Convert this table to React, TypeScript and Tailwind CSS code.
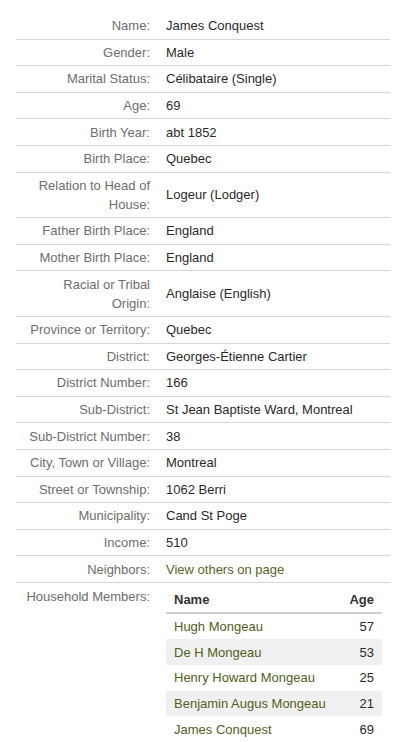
import React from "react";

const rows: { label: string; value: string; link?: boolean }[] = [
  { label: "Name:", value: "James Conquest" },
  { label: "Gender:", value: "Male" },
  { label: "Marital Status:", value: "Célibataire (Single)" },
  { label: "Age:", value: "69" },
  { label: "Birth Year:", value: "abt 1852" },
  { label: "Birth Place:", value: "Quebec" },
  { label: "Relation to Head of House:", value: "Logeur (Lodger)" },
  { label: "Father Birth Place:", value: "England" },
  { label: "Mother Birth Place:", value: "England" },
  { label: "Racial or Tribal Origin:", value: "Anglaise (English)" },
  { label: "Province or Territory:", value: "Quebec" },
  { label: "District:", value: "Georges-Étienne Cartier" },
  { label: "District Number:", value: "166" },
  { label: "Sub-District:", value: "St Jean Baptiste Ward, Montreal" },
  { label: "Sub-District Number:", value: "38" },
  { label: "City, Town or Village:", value: "Montreal" },
  { label: "Street or Township:", value: "1062 Berri" },
  { label: "Municipality:", value: "Cand St Poge" },
  { label: "Income:", value: "510" },
  { label: "Neighbors:", value: "View others on page", link: true },
];

const members = [
  { name: "Hugh Mongeau", age: "57" },
  { name: "De H Mongeau", age: "53" },
  { name: "Henry Howard Mongeau", age: "25" },
  { name: "Benjamin Augus Mongeau", age: "21" },
  { name: "James Conquest", age: "69" },
];

export default function App() {
  return (
    <div
      className="w-[402px] h-[742px] bg-white overflow-hidden pt-[13px] pl-[16px] pr-[12px] text-[13px] leading-[19px]"
      style={{ fontFamily: '"Liberation Sans", Arial, sans-serif' }}
    >
      {rows.map((r, i) => (
        <div key={i} className="flex items-center border-b border-[#d6d6d6]">
          <div className="w-[134px] shrink-0 pl-[9px] py-[3.3px] text-right text-[#6e6e6e]">
            {r.label}
          </div>
          <div
            className={
              "pl-[16px] py-[3.3px] " +
              (r.link ? "text-[#56661f]" : "text-[#2a2a2a]")
            }
          >
            {r.value}
          </div>
        </div>
      ))}
      <div className="flex items-start">
        <div className="w-[134px] shrink-0 pl-[9px] py-[4px] text-right text-[#6e6e6e]">
          Household Members:
        </div>
        <div className="ml-[16px] w-[216px] pt-[4px]">
          <div className="flex justify-between px-[8px] pt-[3px] pb-[3px] border-b-2 border-[#d0d0d0] font-bold text-[#333333]">
            <span>Name</span>
            <span>Age</span>
          </div>
          {members.map((m, i) => (
            <div
              key={i}
              className={
                "flex justify-between px-[8px] py-[3.3px] " +
                (i % 2 === 1 ? "bg-[#f0f0f0]" : "bg-white")
              }
            >
              <span className="text-[#52601d]">{m.name}</span>
              <span className="text-[#2a2a2a]">{m.age}</span>
            </div>
          ))}
        </div>
      </div>
    </div>
  );
}
